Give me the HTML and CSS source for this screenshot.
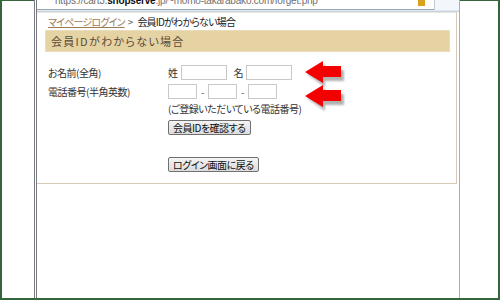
FILE: index.html
```html
<!DOCTYPE html>
<html lang="ja">
<head>
<meta charset="utf-8">
<link rel="stylesheet" href="styles.css">
</head>
<body>
<div class="frame">
  <div class="gutter"></div>
  <div class="window">
    <div class="addressbar">
      <div class="addr-box">
        <span class="addr-text">https://cart3.<b>shopserve</b>.jp/~momo-takarabako.com/forget.php</span>
        <span class="addr-lock"></span>
      </div>
      <span class="addr-refresh"></span>
    </div>
    <div class="panel">
      <div class="crumb"><a href="#" class="crumb-link">マイページログイン</a><span class="crumb-sep">&gt;</span>会員IDがわからない場合</div>
      <div class="title">会員IDがわからない場合</div>
      <div class="form">
        <div class="label">お名前(全角)</div>
        <div class="field">
          <span class="pre">姓</span><span class="input w-name"></span>
          <span class="pre pre-gap">名</span><span class="input w-name"></span>
        </div>
        <div class="label">電話番号(半角英数)</div>
        <div class="field">
          <span class="input w-tel"></span><span class="dash">-</span><span class="input w-tel"></span><span class="dash">-</span><span class="input w-tel"></span>
        </div>
        <div class="label"></div>
        <div class="field note">(ご登録いただいている電話番号)</div>
        <div class="label"></div>
        <div class="field btn-row"><button class="btn">会員IDを確認する</button></div>
        <div class="label"></div>
        <div class="field btn-row back"><button class="btn">ログイン画面に戻る</button></div>
      </div>
      <svg class="arrow arrow-1" width="42" height="28" viewBox="0 0 42 28">
        <defs><filter id="blur"><feGaussianBlur stdDeviation="1"/></filter></defs>
        <polygon points="2,13 20,3 20,9 39,9 39,20 20,20 20,26" fill="#555" opacity="0.45" filter="url(#blur)"/>
        <polygon points="0,11 18,0 18,5 36,5 36,16 18,16 18,22" fill="#f40000"/>
      </svg>
      <svg class="arrow arrow-2" width="42" height="28" viewBox="0 0 42 28">
        <defs><filter id="blur2"><feGaussianBlur stdDeviation="1"/></filter></defs>
        <polygon points="2,13 20,3 20,9 39,9 39,20 20,20 20,26" fill="#555" opacity="0.45" filter="url(#blur2)"/>
        <polygon points="0,11 18,0 18,5 36,5 36,16 18,16 18,22" fill="#f40000"/>
      </svg>
    </div>
  </div>
  <div class="gutter-right"></div>
</div>
</body>
</html>
```
FILE: styles.css
```css
html, body {
  margin: 0;
  padding: 0;
  background: #fff;
}
.frame {
  box-sizing: border-box;
  width: 500px;
  height: 300px;
  border: 2px solid #33663a;
  border-top-width: 1px;
  display: flex;
  font-family: "Noto Sans CJK JP", "Noto Sans", sans-serif;
  font-feature-settings: "palt";
  color: #333;
}
.gutter {
  width: 32px;
  flex: none;
}
.gutter-right {
  flex: 1;
}
.window {
  width: 422px;
  flex: none;
  margin-top: -1px;
  border-left: 3px double #7a7a82;
  border-right: 1px solid #7fbbe6;
  display: flex;
  flex-direction: column;
  background: #fff;
}
.addressbar {
  height: 12px;
  display: flex;
  align-items: flex-start;
  background: #dfe6ee;
  border-bottom: 1px solid #c9d3de;
  box-sizing: border-box;
  overflow: hidden;
}
.addr-box {
  flex: 1;
  height: 10px;
  box-sizing: border-box;
  background: #fff;
  border-bottom: 1px solid #9aa7b5;
  display: flex;
  align-items: flex-start;
  overflow: hidden;
}
.addr-text {
  font-family: "Liberation Sans", sans-serif;
  font-size: 10px;
  line-height: 10px;
  color: #707070;
  margin-left: 18px;
  margin-top: -4px;
  letter-spacing: -0.2px;
  white-space: nowrap;
}
.addr-text b {
  color: #111;
}
.addr-lock {
  margin-left: auto;
  margin-right: 9px;
  width: 7px;
  height: 6px;
  background: #d9a21c;
}
.addr-refresh {
  width: 24px;
  height: 10px;
  background: #f3f6fa;
  border-left: 1px solid #c0ccd8;
}
.panel {
  position: relative;
  height: 172px;
  box-sizing: border-box;
  border-right: 1px solid #d8c8b6;
  border-bottom: 1px solid #d8c8b6;
  border-top: 1px solid #e8e4de;
  margin-right: 2px;
  padding: 1px 0 0 11px;
}
.crumb {
  font-size: 10px;
  line-height: 15px;
  letter-spacing: -0.8px;
  color: #222;
}
.crumb-link {
  color: #a07b5a;
  text-decoration: underline;
}
.crumb-sep {
  margin: 0 5px 0 3px;
  color: #555;
}
.title {
  margin: 1px 0 0 -3px;
  width: 405px;
  height: 22px;
  box-sizing: border-box;
  background: #e5d3a4;
  border: 1px solid #eadcbd;
  color: #5a4a37;
  font-size: 11px;
  line-height: 20px;
  letter-spacing: 1.3px;
  padding-left: 5px;
}
.form {
  display: grid;
  grid-template-columns: 120px auto;
  margin-top: 13px;
  font-size: 10px;
  line-height: 15px;
  letter-spacing: -0.5px;
  color: #333;
}
.label {
  line-height: 15px;
  height: 15px;
}
.field {
  display: flex;
  align-items: center;
  height: 15px;
  margin-bottom: 4px;
}
.pre {
  margin-right: 3px;
}
.pre-gap {
  margin-left: 7px;
}
.input {
  display: inline-block;
  box-sizing: border-box;
  height: 15px;
  border: 1px solid #c8c8c8;
  background: #fff;
}
.w-name {
  width: 46px;
}
.w-tel {
  width: 29px;
}
.dash {
  width: 11px;
  text-align: center;
  color: #555;
}
.note {
  margin-top: -2px;
}
.btn-row {
  margin-top: 0;
}
.back {
  margin-top: 18px;
}
.btn {
  font-family: "Noto Sans CJK JP", sans-serif;
  font-feature-settings: "palt";
  font-size: 10px;
  letter-spacing: -0.5px;
  line-height: 13px;
  height: 15px;
  padding: 0 4px;
  color: #111;
  border: 1px solid #707070;
  border-radius: 2px;
  background: linear-gradient(#f4f4f4, #dcdcdc);
}
.arrow {
  position: absolute;
  left: 268px;
}
.arrow-1 {
  top: 48px;
}
.arrow-2 {
  top: 72px;
}
```
